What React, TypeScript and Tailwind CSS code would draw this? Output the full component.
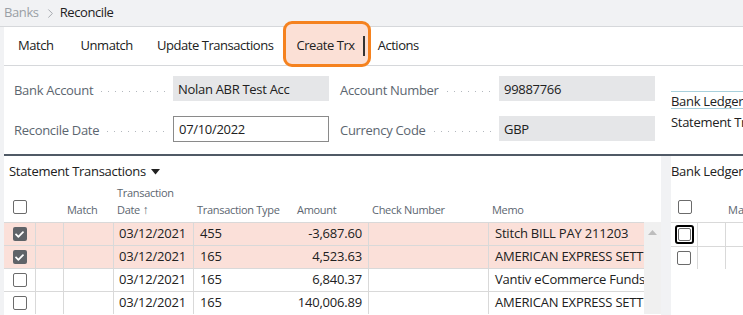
import { FaCheck } from "react-icons/fa";
import { ChevronRight } from "lucide-react";

const rows = [
  { checked: true, date: "03/12/2021", type: "455", amount: "-3,687.60", memo: "Stitch BILL PAY 211203" },
  { checked: true, date: "03/12/2021", type: "165", amount: "4,523.63", memo: "AMERICAN EXPRESS SETTLEMENT" },
  { checked: false, date: "03/12/2021", type: "165", amount: "6,840.37", memo: "Vantiv eCommerce Funds" },
  { checked: false, date: "03/12/2021", type: "165", amount: "140,006.89", memo: "AMERICAN EXPRESS SETTLEMENT" },
];

function Box({ checked = false, focus = false }: { checked?: boolean; focus?: boolean }) {
  if (checked) {
    return (
      <span className="flex h-[14px] w-[14px] items-center justify-center rounded-[2px] bg-[#5f6368] text-white">
        <FaCheck className="h-[9px] w-[9px]" />
      </span>
    );
  }
  if (focus) {
    return (
      <span className="flex h-[19px] w-[19px] items-center justify-center rounded-[3px] border-2 border-black">
        <span className="h-[13px] w-[13px] rounded-[2px] border border-[#6b6b6b] bg-white" />
      </span>
    );
  }
  return <span className="block h-[14px] w-[14px] rounded-[2px] border border-[#6b6b6b] bg-white" />;
}

function Field({ label, value, grey = true }: { label: string; value: string; grey?: boolean }) {
  return (
    <div className="flex h-[25px] items-center">
      <div className="flex w-[159px] shrink-0 items-center pt-[4px]">
        <span className="whitespace-nowrap text-[#5c6670]">{label}</span>
        <span className="ml-[8px] mr-[6px] mt-[2px] h-[1px] flex-1 bg-[repeating-linear-gradient(to_right,#b3b8be_0_1px,transparent_1px_7px)]" />
      </div>
      <div
        className={
          grey
            ? "flex h-[25px] w-[156px] items-center bg-[#e5e6e8] px-[5px] pt-[2px] text-[#212121]"
            : "flex h-[26px] w-[156px] items-center border border-[#8a8a8a] bg-white px-[5px] pt-[2px] text-[#212121]"
        }
      >
        {value}
      </div>
    </div>
  );
}

export default function App() {
  return (
    <div
      className="relative h-[315px] w-[743px] overflow-hidden bg-[#f1f2f4] text-[13px] text-[#212121]"
      style={{ fontFamily: '"Open Sans", "Noto Sans", sans-serif' }}
    >
      {/* breadcrumb */}
      <div className="flex h-[27px] items-center border-b border-[#d6d8db] pl-[4px] tracking-[-0.4px]">
        <span className="text-[#9a9fa5]">Banks</span>
        <ChevronRight className="ml-[4px] mr-[2px] h-[15px] w-[15px] text-[#9a9fa5]" strokeWidth={1.4} />
        <span>Reconcile</span>
      </div>

      <div className="ml-[4px] bg-white">
        {/* actions */}
        <div className="flex h-[39px] items-center border-b border-[#d6d8db] pl-[14px] tracking-[-0.45px]">
          <span>Match</span>
          <span className="ml-[27px]">Unmatch</span>
          <span className="ml-[24px]">Update Transactions</span>
          <span className="relative isolate ml-[23px] flex items-center">
            <span className="absolute -left-[14px] -top-[15px] -z-10 h-[46px] w-[88px] rounded-[9px] border-[3px] border-[#f5821f] bg-[#fbe0d6]" />
            <span>Create Trx</span>
            <span className="ml-[8px] h-[20px] w-[2px] bg-[#333]" />
          </span>
          <span className="ml-[13px]">Actions</span>
        </div>

        {/* header fields */}
        <div className="flex h-[90px] border-b-2 border-[#505a66] pt-[10px] tracking-[-0.3px]">
          <div className="ml-[10px] flex flex-col gap-[15px]">
            <Field label="Bank Account" value="Nolan ABR Test Acc" />
            <Field label="Reconcile Date" value="07/10/2022" grey={false} />
          </div>
          <div className="ml-[11px] flex flex-col gap-[15px]">
            <Field label="Account Number" value="99887766" />
            <Field label="Currency Code" value="GBP" />
          </div>
          <div className="ml-[16px] mt-[15px] flex min-w-0 flex-1 flex-col whitespace-nowrap">
            <div className="flex h-[17px] items-center border-t border-[#a8d0dc] pt-[4px]">Bank Ledger Entries</div>
            <div className="flex h-[28px] items-center border-t border-[#a8d0dc]">Statement Transactions</div>
          </div>
        </div>
      </div>

      {/* lower panels */}
      <div className="flex">
        <div className="ml-[4px] w-[657px] bg-white pb-[10px]">
          <div className="flex h-[32px] items-center pl-[5px] tracking-[-0.3px]">
            Statement Transactions
            <svg className="ml-[5px]" width="9" height="6" viewBox="0 0 9 6">
              <path d="M0 0 L9 0 L4.5 5.5 Z" fill="#212121" />
            </svg>
          </div>
          <div className="flex h-[34px] items-end pb-[4px] text-[11px] text-[#5c6670] tracking-[-0.3px]">
            <div className="flex w-[32px] justify-center pb-[4px]">
              <Box />
            </div>
            <div className="w-[28px]" />
            <div className="w-[50px] pl-[3px]">Match</div>
            <div className="w-[80px] pl-[3px] leading-[17px]">
              Transaction
              <br />
              Date <span className="text-[12px]">↑</span>
            </div>
            <div className="w-[100px] pl-[3px]">Transaction Type</div>
            <div className="w-[75px] pl-[3px]">Amount</div>
            <div className="w-[120px] pl-[3px]">Check Number</div>
            <div className="pl-[3px]">Memo</div>
          </div>
          <div className="flex">
            <div className="w-[640px] tracking-[-0.2px]">
              {rows.map((r, i) => (
                <div
                  key={i}
                  className={
                    r.checked
                      ? "flex h-[23px] border-t border-[#d9d9d9] bg-[#fbe0d9]"
                      : "flex h-[23px] border-t border-[#d9d9d9] bg-white"
                  }
                >
                  <div className="flex w-[32px] items-center justify-center border-r border-[#d9d9d9]">
                    <Box checked={r.checked} />
                  </div>
                  <div className="w-[28px] border-r border-[#d9d9d9]" />
                  <div className="w-[50px] border-r border-[#d9d9d9]" />
                  <div className="flex w-[80px] items-center justify-end border-r border-[#d9d9d9] pr-[7px]">
                    {r.date}
                  </div>
                  <div className="flex w-[100px] items-center pl-[6px]">{r.type}</div>
                  <div className="flex w-[75px] items-center justify-end border-r border-[#d9d9d9] pr-[6px]">
                    {r.amount}
                  </div>
                  <div className="w-[120px] border-r border-[#d9d9d9]" />
                  <div className="flex min-w-0 flex-1 items-center overflow-hidden whitespace-nowrap pl-[6px]">
                    {r.memo}
                  </div>
                </div>
              ))}
            </div>
            <div className="flex w-[17px] justify-center bg-[#f0f0f0] pt-[8px]">
              <svg width="9" height="5" viewBox="0 0 9 5">
                <path d="M0 5 L4.5 0 L9 5 Z" fill="#bdbdbd" />
              </svg>
            </div>
          </div>
        </div>

        <div className="ml-[10px] flex-1 bg-white">
          <div className="flex h-[32px] items-center whitespace-nowrap tracking-[-0.3px]">Bank Ledger Entries</div>
          <div className="flex h-[34px] items-end pb-[4px] text-[11px] text-[#5c6670]">
            <div className="flex w-[27px] justify-center pb-[4px]">
              <Box />
            </div>
            <div className="w-[30px]" />
            <div>Match</div>
          </div>
          <div className="border-t border-[#d9d9d9]">
            {[0, 1].map((i) => (
              <div key={i} className={i ? "flex h-[23px] border-t border-[#d9d9d9]" : "flex h-[23px]"}>
                <div className="flex w-[27px] items-center justify-center border-r border-[#d9d9d9]">
                  <Box focus={i === 0} />
                </div>
                <div className="w-[28px] border-r border-[#d9d9d9]" />
              </div>
            ))}
          </div>
        </div>
      </div>
    </div>
  );
}
